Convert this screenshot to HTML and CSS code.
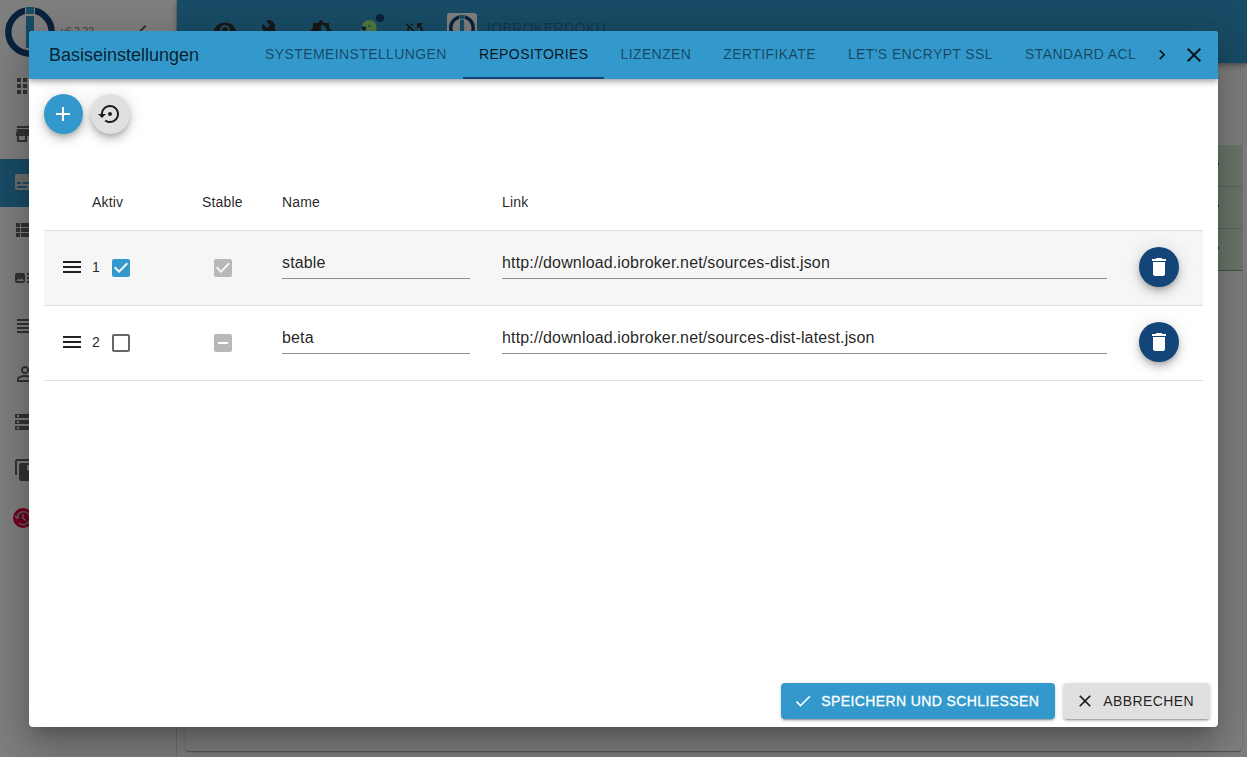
FILE: index.html
```html
<!DOCTYPE html>
<html lang="de">
<head>
<meta charset="utf-8">
<title>Basiseinstellungen</title>
<link rel="stylesheet" href="styles.css">
</head>
<body>
<svg class="defs" width="0" height="0">
  <symbol id="logo" viewBox="0 0 50 50">
    <circle cx="25" cy="25" r="21.700" fill="none" stroke="#144578" stroke-width="6.400"/>
    <path d="M20 0h10v10H20z" fill="#fff"/>
    <path d="M21 0h8v7h-8zM21 9h8v32h-8z" fill="#3399cc"/>
  </symbol>
  <symbol id="trash" viewBox="0 0 24 24"><path d="M6 19c0 1.1.9 2 2 2h8c1.1 0 2-.9 2-2V7H6v12zM19 4h-3.500l-1-1h-5l-1 1H5v2h14V4z"/></symbol>
  <symbol id="menu" viewBox="0 0 24 24"><path d="M3 18h18v-2H3v2zm0-5h18v-2H3v2zm0-7v2h18V6H3z"/></symbol>
  <symbol id="checked" viewBox="0 0 24 24"><path d="M19 3H5c-1.110 0-2 .9-2 2v14c0 1.100.89 2 2 2h14c1.110 0 2-.9 2-2V5c0-1.100-.89-2-2-2zm-9 14l-5-5 1.410-1.410L10 14.170l7.590-7.590L19 8l-9 9z"/></symbol>
  <symbol id="close" viewBox="0 0 24 24"><path d="M19 6.410L17.590 5 12 10.590 6.410 5 5 6.410 10.590 12 5 17.590 6.410 19 12 13.410 17.590 19 19 17.590 13.410 12z"/></symbol>
</svg>

<div class="app">
  <aside class="drawer">
    <div class="drawer-head">
      <svg class="logo"><use href="#logo"/></svg>
      <span class="version">v6.2.22</span>
      <svg class="icon chevron" viewBox="0 0 24 24"><path d="M15.410 7.410L14 6l-6 6 6 6 1.410-1.410L10.830 12z"/></svg>
    </div>
    <div class="nav"><svg class="icon" viewBox="0 0 24 24"><path d="M4 8h4V4H4v4zm6 12h4v-4h-4v4zm-6 0h4v-4H4v4zm0-6h4v-4H4v4zm6 0h4v-4h-4v4zm6-10v4h4V4h-4zm-6 4h4V4h-4v4zm6 6h4v-4h-4v4zm0 6h4v-4h-4v4z"/></svg></div>
    <div class="nav"><svg class="icon" viewBox="0 0 24 24"><path d="M20 4H4v2h16V4zm1 10v-2l-1-5H4l-1 5v2h1v6h10v-6h4v6h2v-6h1zm-9 4H6v-4h6v4z"/></svg></div>
    <div class="nav active"><svg class="icon" viewBox="0 0 24 24"><path d="M20 4H4c-1.100 0-2 .9-2 2v12c0 1.100.9 2 2 2h16c1.100 0 2-.9 2-2V6c0-1.100-.9-2-2-2zM4 12h4v2H4v-2zm10 6H4v-2h10v2zm6 0h-4v-2h4v2zm0-4H10v-2h10v2z"/></svg></div>
    <div class="nav"><svg class="icon" viewBox="0 0 24 24"><path d="M3 14h4v-4H3v4zm0 5h4v-4H3v4zM3 9h4V5H3v4zm5 5h13v-4H8v4zm0 5h13v-4H8v4zM8 5v4h13V5H8z"/></svg></div>
    <div class="nav"><svg class="icon" viewBox="0 0 24 24"><path fill-rule="evenodd" d="M4 7h6a2 2 0 0 1 2 2v6a2 2 0 0 1-2 2H4a2 2 0 0 1-2-2V9a2 2 0 0 1 2-2zm-.5 8h7.500l-2.300-3-1.700 2-1.200-1.500zM14 7h8v2h-8zm0 4h8v2h-8zm0 4h8v2h-8z"/></svg></div>
    <div class="nav"><svg class="icon" viewBox="0 0 24 24"><path d="M4 15h16v-2H4v2zm0 4h16v-2H4v2zm0-8h16V9H4v2zm0-6v2h16V5H4z"/></svg></div>
    <div class="nav"><svg class="icon" viewBox="0 0 24 24"><path d="M12 5.900c1.160 0 2.100.94 2.100 2.100s-.94 2.100-2.100 2.100S9.900 9.160 9.900 8s.94-2.100 2.100-2.100m0 9c2.970 0 6.100 1.460 6.100 2.100v1.100H5.900V17c0-.64 3.130-2.100 6.100-2.100M12 4C9.790 4 8 5.790 8 8s1.790 4 4 4 4-1.790 4-4-1.790-4-4-4zm0 9c-2.670 0-8 1.340-8 4v3h16v-3c0-2.660-5.330-4-8-4z"/></svg></div>
    <div class="nav"><svg class="icon" viewBox="0 0 24 24"><path d="M2 20h20v-4H2v4zm2-3h2v2H4v-2zM2 4v4h20V4H2zm4 3H4V5h2v2zm-4 7h20v-4H2v4zm2-3h2v2H4v-2z"/></svg></div>
    <div class="nav"><svg class="icon" viewBox="0 0 24 24"><path fill-rule="evenodd" d="M2 17V3a2 2 0 0 1 2-2h14v2H4v14zM8 5h12a2 2 0 0 1 2 2v14a2 2 0 0 1-2 2H8a2 2 0 0 1-2-2V7a2 2 0 0 1 2-2zm6 2v6l2.500-1.500L19 13V7z"/></svg></div>
    <div class="nav"><svg class="icon" viewBox="0 0 24 24"><circle cx="10" cy="12" r="10" fill="#e6003c"/><g fill="none" stroke="#bbb" stroke-width="1.500"><path d="M4 11a6.500 6.500 0 1 1 2 6M2 10l2 2.500 2.500-2M10 8v4.500l3 2"/></g></svg></div>
  </aside>
  <main class="main">
    <header class="topbar">
      <svg class="icon eye" viewBox="0 0 24 24"><path d="M12 4.500C7 4.500 2.730 7.610 1 12c1.730 4.390 6 7.500 11 7.500s9.270-3.110 11-7.500c-1.730-4.390-6-7.500-11-7.500zM12 17c-2.760 0-5-2.240-5-5s2.240-5 5-5 5 2.240 5 5-2.240 5-5 5zm0-8c-1.660 0-3 1.340-3 3s1.340 3 3 3 3-1.340 3-3-1.340-3-3-3z"/></svg>
      <svg class="icon wrench" viewBox="0 0 24 24"><path d="M22.700 19l-9.100-9.100c.9-2.300.4-5-1.500-6.900-2-2-5-2.400-7.400-1.300L9 6 6 9 1.600 4.700C.4 7.100.9 10.100 2.900 12.100c1.900 1.900 4.600 2.400 6.900 1.500l9.100 9.100c.4.4 1 .4 1.400 0l2.300-2.300c.5-.4.5-1.100.1-1.400z"/></svg>
      <svg class="icon bright" viewBox="0 0 24 24"><path d="M20 15.310L23.310 12 20 8.690V4h-4.690L12 .69 8.690 4H4v4.690L.69 12 4 15.310V20h4.690L12 23.310 15.310 20H20v-4.690zM12 18V6c3.310 0 6 2.690 6 6s-2.690 6-6 6z"/></svg>
      <div class="expert">
        <svg class="icon" viewBox="0 0 24 24"><path d="M12.500 1c5 0 7.500 4 7 9-.3 5-3.500 7-3.500 13H8v-4H5c-1-3 0-5-2-6l2-4c0-5 3-8 7.500-8z" fill="#a0f080"/><circle cx="7" cy="9.500" r="2.300" fill="#144578"/><circle cx="12" cy="7" r=".8" fill="#144578"/></svg>
        <span class="badge"></span>
      </div>
      <svg class="icon sync" viewBox="0 0 24 24"><path d="M10 6.350V4.260c-.8.210-1.550.54-2.230.96l1.460 1.460c.25-.12.5-.24.77-.33zM2.860 5.410l2.360 2.360C4.450 8.990 4 10.440 4 12c0 2.210.91 4.200 2.360 5.640L4 20h6v-6l-2.240 2.240C6.680 15.150 6 13.660 6 12c0-1 .25-1.940.68-2.770l8.080 8.080c-.25.130-.5.250-.77.340v2.090c.8-.21 1.550-.54 2.230-.96l2.360 2.360 1.270-1.270L4.140 4.140 2.860 5.410zM20 4h-6v6l2.240-2.240C17.320 8.850 18 10.340 18 12c0 1-.25 1.940-.68 2.770l1.460 1.460C19.550 15.010 20 13.560 20 12c0-2.210-.91-4.200-2.360-5.640L20 4z"/></svg>
      <div class="host-logo"><svg><use href="#logo"/></svg></div>
      <span class="host">IOBROKERDOKU</span>
    </header>
    <section class="paper">
      <div class="green"><i></i></div><div class="green"><i></i></div><div class="green"><i></i></div>
    </section>
  </main>
</div>

<div class="backdrop">
  <div class="dialog">
    <header class="bar">
      <h1 class="title">Basiseinstellungen</h1>
      <nav class="tabs">
        <a class="tab">SYSTEMEINSTELLUNGEN</a>
        <a class="tab selected">REPOSITORIES</a>
        <a class="tab">LIZENZEN</a>
        <a class="tab">ZERTIFIKATE</a>
        <a class="tab">LET'S ENCRYPT SSL</a>
        <a class="tab">STANDARD ACL</a>
      </nav>
      <svg class="scroll" viewBox="0 0 24 24"><path d="M8.590 16.340l4.580-4.590-4.580-4.590L10 5.750l6 6-6 6z"/></svg>
      <svg class="icon" viewBox="0 0 24 24"><use href="#close"/></svg>
    </header>
    <div class="content">
      <div class="actions">
        <button class="fab add"><svg class="icon" viewBox="0 0 24 24"><path d="M19 13h-6v6h-2v-6H5v-2h6V5h2v6h6v2z"/></svg></button>
        <button class="fab reset"><svg class="icon" viewBox="0 0 24 24"><path d="M14 12c0-1.100-.9-2-2-2s-2 .9-2 2 .9 2 2 2 2-.9 2-2zm-2-9c-4.970 0-9 4.030-9 9H0l4 4 4-4H5c0-3.870 3.130-7 7-7s7 3.130 7 7-3.130 7-7 7c-1.510 0-2.910-.49-4.060-1.300l-1.420 1.440C8.040 20.300 9.940 21 12 21c4.970 0 9-4.030 9-9s-4.030-9-9-9z"/></svg></button>
      </div>
      <div class="table">
        <div class="row head"><div class="cell first">Aktiv</div><div class="cell">Stable</div><div class="cell">Name</div><div class="cell">Link</div></div>
        <div class="row body odd">
          <div class="cell first"><svg class="icon drag"><use href="#menu"/></svg><span>1</span><svg class="icon check blue"><use href="#checked"/></svg></div>
          <div class="cell"><svg class="icon check grey"><use href="#checked"/></svg></div>
          <div class="cell"><div class="input">stable</div></div>
          <div class="cell"><div class="input">http://download.iobroker.net/sources-dist.json</div></div>
          <div class="cell"><button class="fab delete"><svg class="icon"><use href="#trash"/></svg></button></div>
        </div>
        <div class="row body">
          <div class="cell first"><svg class="icon drag"><use href="#menu"/></svg><span>2</span><svg class="icon check empty" viewBox="0 0 24 24"><path d="M19 5v14H5V5h14m0-2H5c-1.100 0-2 .9-2 2v14c0 1.100.9 2 2 2h14c1.100 0 2-.9 2-2V5c0-1.100-.9-2-2-2z"/></svg></div>
          <div class="cell"><svg class="icon check grey" viewBox="0 0 24 24"><path d="M19 3H5c-1.100 0-2 .9-2 2v14c0 1.100.9 2 2 2h14c1.100 0 2-.9 2-2V5c0-1.100-.9-2-2-2zm-2 10H7v-2h10v2z"/></svg></div>
          <div class="cell"><div class="input">beta</div></div>
          <div class="cell"><div class="input">http://download.iobroker.net/sources-dist-latest.json</div></div>
          <div class="cell"><button class="fab delete"><svg class="icon"><use href="#trash"/></svg></button></div>
        </div>
      </div>
    </div>
    <footer class="footer">
      <button class="btn primary"><svg viewBox="0 0 24 24"><path d="M9 16.170L4.830 12l-1.420 1.410L9 19 21 7l-1.410-1.410z"/></svg>SPEICHERN UND SCHLIESSEN</button>
      <button class="btn"><svg viewBox="0 0 24 24"><use href="#close"/></svg>ABBRECHEN</button>
    </footer>
  </div>
</div>
</body>
</html>
```
FILE: styles.css
```css
* { box-sizing: border-box; }
body {
  margin: 0;
  height: 757px;
  overflow: hidden;
  font-family: "Liberation Sans", Arial, sans-serif;
  font-size: 14px;
  color: rgba(0, 0, 0, .87);
}
svg { display: block; fill: currentColor; flex: none; }
button { border: 0; padding: 0; font: inherit; color: inherit; }
.defs { position: absolute; }
.icon { width: 24px; height: 24px; }

/* Application behind the dialog */
.app { display: flex; height: 757px; background: #fff; }
.drawer { width: 177px; border-right: 1px solid #e0e0e0; color: #666; flex: none; }
.drawer-head { display: flex; align-items: center; height: 63px; padding-left: 5px; }
.logo { width: 50px; height: 50px; }
.version { font-size: 10px; margin: 0 0 0 6px; width: 70px; white-space: nowrap; color: #888; }
.chevron { margin-top: -1px; }
.nav { display: flex; align-items: center; height: 48px; padding: 0 0 2px 13px; }
.nav.active { background: #3399cc; width: 177px; color: #ddd; }
.main { flex: 1; display: flex; flex-direction: column; }
.topbar {
  display: flex; align-items: center; height: 63px; flex: none; padding: 0 0 2px 36px;
  background: #3399cc; color: #333;
  box-shadow: 0 2px 4px -1px rgba(0,0,0,.2), 0 4px 5px rgba(0,0,0,.14), 0 1px 10px rgba(0,0,0,.12);
}
.eye { margin-top: -1px; }
.wrench { margin-left: 24px; }
.bright { margin-left: 24px; }
.expert { position: relative; margin-left: 24px; }
.badge { position: absolute; top: -5px; right: -3px; width: 8px; height: 8px; border-radius: 50%; background: #144578; }
.sync { margin-left: 22px; }
.host-logo { margin: -5px 0 0 20px; width: 30px; height: 30px; border-radius: 3px; background: #fff; padding: 2px; }
.host-logo svg { width: 26px; height: 26px; }
.host { margin: -6px 0 0 10px; letter-spacing: .4px; color: #257099; }
.paper {
  flex: 1; margin: 8px 5px 6px 8px; padding-top: 74px; border-radius: 4px;
  box-shadow: 0 2px 1px -1px rgba(0,0,0,.2), 0 1px 1px rgba(0,0,0,.14), 0 1px 3px rgba(0,0,0,.12);
}
.green { display: flex; align-items: center; justify-content: flex-end; height: 42px; padding: 0 23px 4px 0; background: #d3edd2; border-bottom: 1px solid #b2c8b2; }
.green:last-child { border-bottom-color: #8fa08f; }
.green i { width: 2px; height: 2px; background: #444; }

/* Modal */
.backdrop { position: absolute; inset: 0; display: flex; padding: 31px 29px 30px; background: rgba(0, 0, 0, .5); }
.dialog {
  flex: 1; display: flex; flex-direction: column; background: #fff; border-radius: 4px; overflow: hidden;
  box-shadow: 0 11px 15px -7px rgba(0,0,0,.2), 0 24px 38px 3px rgba(0,0,0,.14), 0 9px 46px 8px rgba(0,0,0,.12);
}
.bar {
  display: flex; align-items: center; height: 48px; padding: 0 12px 0 20px; background: #3399cc;
  box-shadow: 0 2px 4px -1px rgba(0,0,0,.2), 0 4px 5px rgba(0,0,0,.14), 0 1px 10px rgba(0,0,0,.12);
}
.title { margin: 0; width: 200px; font-size: 18px; font-weight: 400; flex: none; color: rgba(0, 0, 0, .8); }
.tabs { display: flex; width: 903px; flex: none; }
.tab { height: 48px; padding: 0 16px; line-height: 47px; letter-spacing: .4px; white-space: nowrap; color: rgba(0, 0, 0, .54); }
.tab.selected { color: rgba(0, 0, 0, .87); box-shadow: inset 0 -2px #144578; }
.scroll { width: 20px; height: 20px; margin-right: 10px; }
.content { flex: 1; padding: 15px; }
.actions { display: flex; gap: 8px; margin-bottom: 40px; }
.fab {
  display: flex; align-items: center; justify-content: center; width: 40px; height: 40px; border-radius: 50%;
  box-shadow: 0 3px 5px -1px rgba(0,0,0,.2), 0 6px 10px rgba(0,0,0,.14), 0 1px 18px rgba(0,0,0,.12);
}
.add { width: 39px; background: #3399cc; color: #fff; padding-right: 1px; }
.reset { width: 39px; background: #e0e0e0; padding-right: 2px; }
.delete { background: #144578; color: #fff; }
.row { display: grid; grid-template-columns: 142px 80px 220px 1fr 80px; border-bottom: 1px solid #e0e0e0; }
.row.odd { background: #f6f6f6; }
.cell { padding: 16px; line-height: 24px; }
.head { letter-spacing: .15px; }
.head .first { padding-left: 48px; }
.body { height: 75px; }
.body .first { display: flex; align-items: center; padding: 0 0 3px 16px; }
.drag { margin-right: 8px; }
.check { margin: 9px 0 0 9px; }
.first .check { margin: 2px 0 0 9px; }
.blue { color: #3399cc; }
.grey { color: #b8b8b8; }
.empty { color: rgba(0, 0, 0, .6); }
.input { height: 32px; padding-top: 4px; font-size: 16px; letter-spacing: .15px; border-bottom: 1px solid #8e8e8e; }
.footer { display: flex; justify-content: flex-end; gap: 8px; padding: 8px; }
.btn {
  display: flex; align-items: center; height: 36px; padding: 0 16px 0 12px; border-radius: 4px;
  letter-spacing: .4px; white-space: nowrap; background: #e0e0e0;
  box-shadow: 0 3px 1px -2px rgba(0,0,0,.2), 0 2px 2px rgba(0,0,0,.14), 0 1px 5px rgba(0,0,0,.12);
}
.btn svg { width: 20px; height: 20px; margin-right: 8px; }
.primary { background: #3399cc; color: #fff; -webkit-text-stroke: .3px #fff; }
```
